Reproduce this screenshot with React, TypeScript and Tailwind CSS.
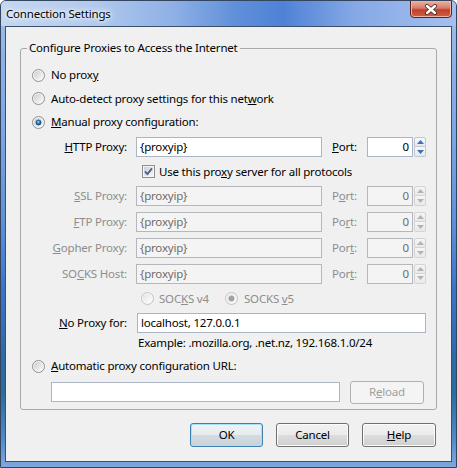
import React from "react";

const font = "font-['Noto_Sans','Open_Sans',sans-serif]";

function Radio({ checked = false, disabled = false }: { checked?: boolean; disabled?: boolean }) {
  const k = disabled ? "d" : "e";
  return (
    <svg width="13" height="13" viewBox="0 0 13 13" className="shrink-0">
      <defs>
        <linearGradient id={`rf-${k}`} x1="0" y1="0" x2="1" y2="1">
          <stop offset="0" stopColor={disabled ? "#e4e4e4" : "#cbcbcb"} />
          <stop offset="1" stopColor="#fdfdfd" />
        </linearGradient>
        <radialGradient id="rdot" cx="0.45" cy="0.4" r="0.65">
          <stop offset="0" stopColor="#9fdcf8" />
          <stop offset="0.45" stopColor="#2b84c6" />
          <stop offset="1" stopColor="#0d3f78" />
        </radialGradient>
      </defs>
      <circle cx="6.5" cy="6.5" r="6" fill="#f6f6f6" stroke={disabled ? "#c2c2c2" : "#8d8e8e"} />
      <circle cx="6.5" cy="6.5" r="4.6" fill={`url(#rf-${k})`} />
      {checked && (
        <circle
          cx="6.5"
          cy="6.5"
          r="2.6"
          fill={disabled ? "#a3a3a3" : "url(#rdot)"}
          stroke={disabled ? "#8e8e8e" : "#0e3b6e"}
          strokeWidth="0.6"
        />
      )}
    </svg>
  );
}

function Checkbox() {
  return (
    <svg width="13" height="13" viewBox="0 0 13 13" className="shrink-0">
      <defs>
        <linearGradient id="cbf" x1="0" y1="0" x2="1" y2="1">
          <stop offset="0" stopColor="#cbcfd5" />
          <stop offset="1" stopColor="#f7f7f7" />
        </linearGradient>
      </defs>
      <rect x="0.5" y="0.5" width="12" height="12" fill="#f5f5f5" stroke="#8e8f8f" />
      <rect x="2" y="2" width="9" height="9" fill="url(#cbf)" />
      <path d="M3 6.3 L5.4 9 L10 3.4" stroke="#4b5f96" strokeWidth="1.8" fill="none" />
    </svg>
  );
}

function Arrow({ up, disabled }: { up?: boolean; disabled?: boolean }) {
  return (
    <svg width="7" height="4" viewBox="0 0 7 4">
      <path d={up ? "M0 4 L3.5 0 L7 4Z" : "M0 0 L3.5 4 L7 0Z"} fill={disabled ? "#b4b4b4" : "#3e6fb8"} />
    </svg>
  );
}

function Spinner({ disabled }: { disabled?: boolean }) {
  const half = `flex h-[10px] items-center justify-center border ${
    disabled
      ? "border-[#d4d4d4] bg-[linear-gradient(#f5f5f5,#e9e9e9)]"
      : "border-[#c2c8d2] bg-[linear-gradient(#f7f9fb,#e4e8ee)]"
  }`;
  return (
    <div className="ml-[1px] flex w-[12px] flex-col">
      <div className={`${half} rounded-t-[2px]`}>
        <Arrow up disabled={disabled} />
      </div>
      <div className={`${half} rounded-b-[2px] border-t-0`}>
        <Arrow disabled={disabled} />
      </div>
    </div>
  );
}

function Key({ c }: { c: string }) {
  return <u className="underline underline-offset-[1px]">{c}</u>;
}

function TextBox({ value, disabled, w, right }: { value: string; disabled?: boolean; w: string; right?: boolean }) {
  return (
    <div
      className={`flex h-[20px] items-center border px-[3px] ${w} ${right ? "justify-end" : ""} ${
        disabled ? "border-[#b4b8bc] bg-[#f4f4f4] text-[#6d6d6d]" : "border-[#abb5c3] bg-white text-black"
      }`}
    >
      {value}
    </div>
  );
}

function ProxyRow({
  label,
  port,
  disabled,
  h,
}: {
  label: React.ReactNode;
  port: React.ReactNode;
  disabled?: boolean;
  h: string;
}) {
  return (
    <div className={`flex items-center ${h}`}>
      <div className={`w-[106px] text-right ${disabled ? "text-[#8d8d8d]" : "text-black"}`}>{label}</div>
      <div className="ml-[9px]">
        <TextBox value="{proxyip}" disabled={disabled} w="w-[186px]" />
      </div>
      <div className={`ml-[10px] w-[35px] ${disabled ? "text-[#8d8d8d]" : "text-black"}`}>{port}</div>
      <TextBox value="0" disabled={disabled} w="w-[46px]" right />
      <Spinner disabled={disabled} />
    </div>
  );
}

function Button({ children, primary, disabled, w }: { children: React.ReactNode; primary?: boolean; disabled?: boolean; w: string }) {
  let cls = "border-[#707070] bg-[linear-gradient(#f2f2f2,#ebebeb_50%,#dddddd_50%,#cfcfcf)] shadow-[inset_0_0_0_1px_#fbfbfb] text-black";
  if (primary)
    cls =
      "border-[#3c7fb1] bg-[linear-gradient(#eef3f6,#e6ebee_50%,#d5dde2_50%,#c8d2d8)] shadow-[inset_0_0_0_1px_#a9e2f7] text-black";
  if (disabled) cls = "border-[#adb2b5] bg-[#f4f4f4] text-[#a0a0a0]";
  return (
    <div className={`flex items-center justify-center rounded-[3px] border ${w} ${cls}`}>{children}</div>
  );
}

export default function App() {
  return (
    <div
      className={`${font} relative flex h-[468px] w-[457px] flex-col overflow-hidden rounded-t-[6px] border border-[#34465e] bg-[linear-gradient(180deg,#a6c2ea_0%,#8fb2e6_12%,#7aa4e2_30%,#5d8fd8_48%,#3b74c6_62%,#2d6aa8_76%,#2a6d9a_84%,#4b86c6_93%,#7ea8de_100%)] text-[11.5px] leading-[16px] tracking-[-0.2px]`}
    >
      {/* title bar */}
      <div className="flex h-[25px] shrink-0 items-center bg-[linear-gradient(90deg,#c4d7f0_0%,#b2caec_20%,#8eb0e6_38%,#5f8fd9_52%,#4f82d6_62%,#86a9e6_78%,#a4c0ee_100%)] pl-[5px]">
        <span className="text-black [text-shadow:0_0_6px_#fff,0_0_10px_#fff,0_0_3px_#fff]">Connection Settings</span>
      </div>
      <div className="absolute right-[4px] top-[-1px] flex h-[18px] w-[42px] items-center justify-center rounded-b-[4px] border border-[#5a2219] bg-[linear-gradient(#eab3a6,#d77b67_45%,#c0402a_55%,#d2603f)] shadow-[inset_0_0_0_1px_#f0b4a4]">
        <svg width="14" height="11" viewBox="0 0 14 11">
          <path d="M3 2 L11 9 M11 2 L3 9" stroke="#4a2a28" strokeWidth="4" strokeLinecap="round" />
          <path d="M3 2 L11 9 M11 2 L3 9" stroke="#ffffff" strokeWidth="2.4" strokeLinecap="round" />
        </svg>
      </div>

      {/* client area */}
      <div className="mx-[4px] flex h-[436px] flex-col border border-[#3a4f6a] bg-[#f0f0f0]">
        <fieldset className="ml-[14px] mt-[13px] w-[417px] rounded-[3px] border border-[#a9a9a9] pb-[5px] pt-[7px]">
          <legend className="ml-[6px] px-[2px] leading-[16px] text-black">Configure Proxies to Access the Internet</legend>

          <div className="flex h-[24px] items-center gap-[6px] pl-[11px]">
            <Radio />
            <span>
              No prox<Key c="y" />
            </span>
          </div>
          <div className="flex h-[23px] items-center gap-[6px] pl-[11px]">
            <Radio />
            <span>
              Auto-detect proxy settings for this net<Key c="w" />ork
            </span>
          </div>
          <div className="flex h-[24px] items-center gap-[6px] pl-[11px]">
            <Radio checked />
            <span>
              <Key c="M" />anual proxy configuration:
            </span>
          </div>

          <ProxyRow
            h="h-[26px]"
            label={
              <>
                <Key c="H" />TTP Proxy:
              </>
            }
            port={
              <>
                <Key c="P" />ort:
              </>
            }
          />
          <div className="flex h-[23px] items-center gap-[4px] pl-[121px]">
            <Checkbox />
            <span>
              Use this pro<Key c="x" />y server for all protocols
            </span>
          </div>
          <ProxyRow
            disabled
            h="h-[26px]"
            label={
              <>
                <Key c="S" />SL Proxy:
              </>
            }
            port={
              <>
                P<Key c="o" />rt:
              </>
            }
          />
          <ProxyRow
            disabled
            h="h-[26px]"
            label={
              <>
                <Key c="F" />TP Proxy:
              </>
            }
            port={
              <>
                Po<Key c="r" />t:
              </>
            }
          />
          <ProxyRow
            disabled
            h="h-[26px]"
            label={
              <>
                <Key c="G" />opher Proxy:
              </>
            }
            port={
              <>
                Por<Key c="t" />:
              </>
            }
          />
          <ProxyRow
            disabled
            h="h-[25px]"
            label={
              <>
                SO<Key c="C" />KS Host:
              </>
            }
            port={
              <>
                Por<Key c="t" />:
              </>
            }
          />

          <div className="flex h-[25px] items-center pl-[120px] text-[#8d8d8d]">
            <Radio disabled />
            <span className="ml-[5px] w-[66px]">
              SOC<Key c="K" />S v4
            </span>
            <Radio checked disabled />
            <span className="ml-[6px]">
              SOCKS <Key c="v" />5
            </span>
          </div>

          <div className="flex h-[23px] items-center">
            <div className="w-[106px] text-right">
              <Key c="N" />o Proxy for:
            </div>
            <div className="ml-[10px]">
              <TextBox value="localhost, 127.0.0.1" w="w-[289px]" />
            </div>
          </div>
          <div className="flex h-[18px] items-center pl-[117px]">Example: .mozilla.org, .net.nz, 192.168.1.0/24</div>

          <div className="flex h-[28px] items-center gap-[6px] pl-[11px]">
            <Radio />
            <span>
              <Key c="A" />utomatic proxy configuration URL:
            </span>
          </div>
          <div className="flex h-[24px] items-center pl-[30px]">
            <TextBox value="" w="w-[289px]" />
            <div className="ml-[10px] flex h-[23px]">
              <Button disabled w="w-[74px]">
                R<Key c="e" />load
              </Button>
            </div>
          </div>
        </fieldset>

        <div className="mt-[13px] flex h-[24px] justify-end gap-[13px] pr-[15px]">
          <Button primary w="w-[73px]">
            OK
          </Button>
          <Button w="w-[73px]">Cancel</Button>
          <Button w="w-[74px]">
            <Key c="H" />elp
          </Button>
        </div>
      </div>
    </div>
  );
}
